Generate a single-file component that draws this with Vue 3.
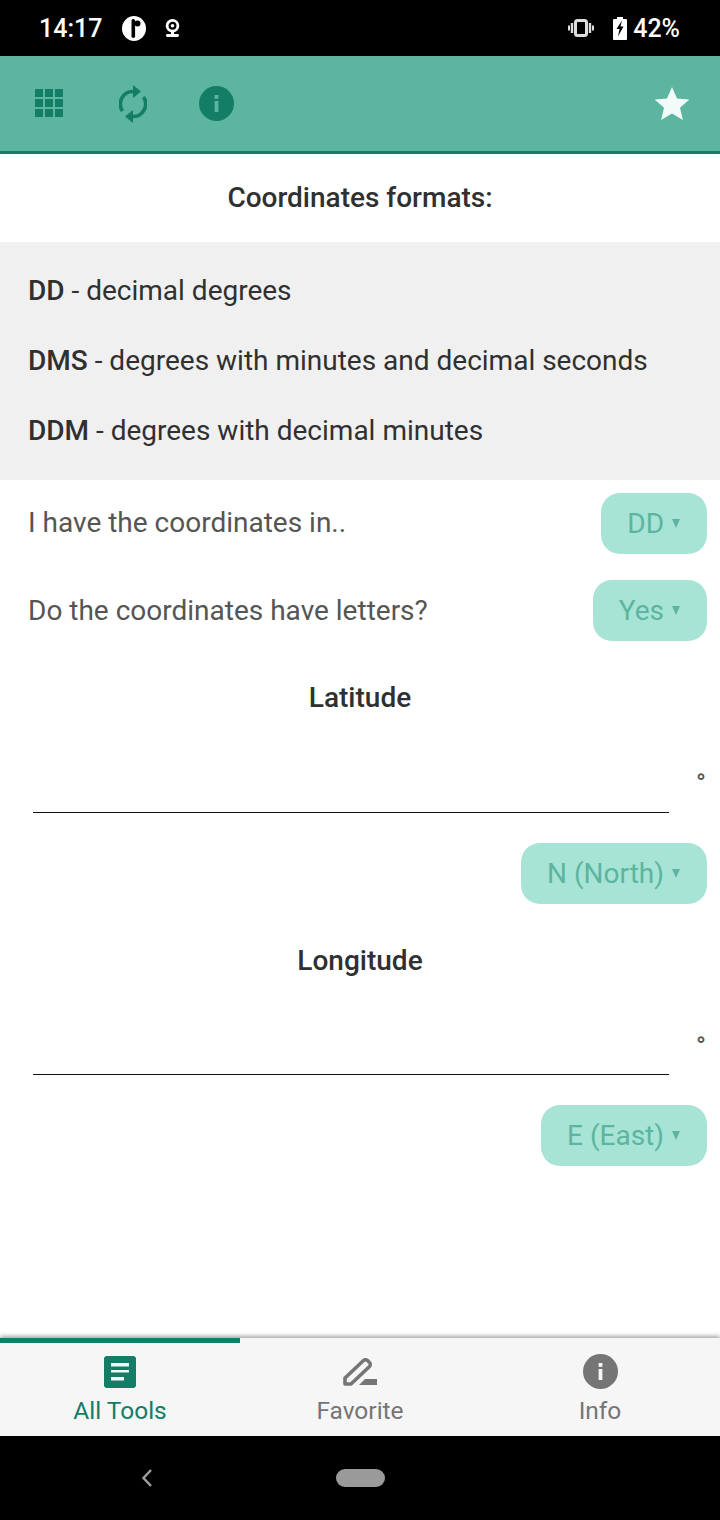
<script setup>
const formats = [
  { key: 'DD', text: ' - decimal degrees' },
  { key: 'DMS', text: ' - degrees with minutes and decimal seconds' },
  { key: 'DDM', text: ' - degrees with decimal minutes' }
]
const grid = [0, 1, 2, 3, 4, 5, 6, 7, 8]
</script>

<template>
  <div class="screen">
    <div class="status-bar">
      <div class="status-left">
        <span class="time">14:17</span>
        <svg class="ic-pi" width="24" height="25" viewBox="0 0 24 25">
          <ellipse cx="12" cy="12.5" rx="12" ry="12.500" fill="#fff" />
          <rect x="9.500" y="3" width="3.600" height="19" rx="1.800" fill="#000" />
          <circle cx="15.500" cy="7.500" r="3" fill="#000" />
        </svg>
        <svg class="ic-cam" width="17" height="18" viewBox="0 0 17 18">
          <circle cx="8.500" cy="6.800" r="5.400" fill="none" stroke="#fff" stroke-width="2.800" />
          <circle cx="8.500" cy="6.800" r="1.800" fill="#fff" />
          <rect x="2" y="15" width="13" height="3" rx="1.400" fill="#fff" />
          <rect x="7" y="12" width="3" height="4" fill="#fff" />
        </svg>
      </div>
      <div class="status-right">
        <svg width="26" height="18" viewBox="0 0 26 18">
          <rect x="7.500" y="1.500" width="11" height="15" rx="2" fill="none" stroke="#ddd" stroke-width="3" />
          <path d="M4 4v10M22 4v10" stroke="#ddd" stroke-width="2.400" />
          <path d="M1 6.500v5M25 6.500v5" stroke="#ddd" stroke-width="2" />
        </svg>
        <svg class="ic-batt" width="14" height="23" viewBox="0 0 14 23">
          <path d="M4 0h6v2h3a1 1 0 0 1 1 1v19a1 1 0 0 1-1 1H1a1 1 0 0 1-1-1V3a1 1 0 0 1 1-1h3z" fill="#fff" />
          <path d="M9 3.500 3.500 12h3l-1.500 7.500 5.500-10H7.500z" fill="#000" />
        </svg>
        <span class="pct">42%</span>
      </div>
    </div>

    <header class="toolbar">
      <div class="toolbar-left">
        <div class="grid-icon">
          <span v-for="n in grid" :key="n"></span>
        </div>
        <svg class="refresh" width="28" height="38" viewBox="0 0 28 38" fill="none">
          <path d="M3.500 26A12.500 12.500 0 0 1 15 6.600" stroke="#137d66" stroke-width="3.600" />
          <path d="M24.500 12A12.500 12.500 0 0 1 13 31.400" stroke="#137d66" stroke-width="3.600" />
          <path d="M14 0 22 6.500 14 13z" fill="#137d66" />
          <path d="M14 25 6 31.500 14 38z" fill="#137d66" />
        </svg>
        <svg class="info" width="35" height="35" viewBox="0 0 35 35">
          <circle cx="17.500" cy="17.500" r="17.500" fill="#137d66" />
          <rect x="15.600" y="15" width="3.800" height="11" fill="#5bb5a0" />
          <rect x="15.600" y="9" width="3.800" height="3.800" fill="#5bb5a0" />
        </svg>
      </div>
      <svg width="36" height="34" viewBox="0 0 36 34">
        <path d="M18 0l5 11.600 12.400 1-9.400 8.200 2.900 12.200L18 26.500 7.100 33l2.900-12.200L.6 12.600l12.400-1z" fill="#f1fbf9" />
      </svg>
    </header>

    <h2 class="title">Coordinates formats:</h2>

    <section class="formats">
      <p v-for="f in formats" :key="f.key"><b>{{ f.key }}</b>{{ f.text }}</p>
    </section>

    <main class="form">
      <div class="row row-first">
        <span>I have the coordinates in..</span>
        <div class="pill">DD<i class="caret"></i></div>
      </div>
      <div class="row row-second">
        <span>Do the coordinates have letters?</span>
        <div class="pill">Yes<i class="caret"></i></div>
      </div>

      <h3 class="label">Latitude</h3>
      <div class="coord coord-lat">
        <div class="line"></div>
        <span class="deg">°</span>
      </div>
      <div class="pill-end"><div class="pill">N (North)<i class="caret"></i></div></div>

      <h3 class="label">Longitude</h3>
      <div class="coord coord-lon">
        <div class="line"></div>
        <span class="deg">°</span>
      </div>
      <div class="pill-end"><div class="pill">E (East)<i class="caret"></i></div></div>
    </main>

    <nav class="tabs">
      <div class="tab active">
        <div class="tab-icon">
          <svg width="32" height="32" viewBox="0 0 32 32">
            <rect width="32" height="32" rx="3" fill="#137d66" />
            <path d="M7 7h18v3.500H7zM7 14h18v2.500H7zM7 21h13v3.500H7z" fill="#f6f6f6" />
          </svg>
        </div>
        <span>All Tools</span>
      </div>
      <div class="tab">
        <div class="tab-icon">
          <svg width="34" height="28" viewBox="0 0 34 28" fill="none">
            <path d="M2 26v-6L20.500 2.500c1-1 3-1 4 0l2 2c1 1 1 3 0 4L8 26z" stroke="#757575" stroke-width="3.600" stroke-linejoin="round" />
            <path d="M16 27l6-6h12v6z" fill="#757575" />
          </svg>
        </div>
        <span>Favorite</span>
      </div>
      <div class="tab">
        <div class="tab-icon">
          <svg width="35" height="35" viewBox="0 0 35 35">
            <circle cx="17.500" cy="17.500" r="17.500" fill="#757575" />
            <rect x="15.600" y="15" width="3.800" height="11" fill="#f6f6f6" />
            <rect x="15.600" y="9" width="3.800" height="3.800" fill="#f6f6f6" />
          </svg>
        </div>
        <span>Info</span>
      </div>
    </nav>

    <div class="nav-bar">
      <svg class="back" width="12" height="18" viewBox="0 0 12 18" fill="none">
        <path d="M10 1 2.500 9l7.500 8" stroke="#a0a0a0" stroke-width="2.400" />
      </svg>
      <div class="home"></div>
    </div>
  </div>
</template>

<style scoped>
.screen {
  width: 720px;
  height: 1520px;
  display: flex;
  flex-direction: column;
  font-family: Roboto, sans-serif;
  background: #fff;
  overflow: hidden;
}

.status-bar {
  height: 56px;
  flex: none;
  background: #000;
  color: #fff;
  display: flex;
  align-items: center;
  justify-content: space-between;
  padding: 0 40px 0 39px;
  font-size: 25px;
  font-weight: 500;
}
.status-left,
.status-right {
  display: flex;
  align-items: center;
}
.ic-pi {
  margin-left: 20px;
}
.ic-cam {
  margin-left: 18px;
}
.ic-batt {
  margin-left: 19px;
}
.pct {
  margin-left: 6px;
}

.toolbar {
  height: 98px;
  flex: none;
  box-sizing: border-box;
  background: #5bb5a0;
  border-bottom: 3px solid #137d66;
  display: flex;
  align-items: center;
  justify-content: space-between;
  padding: 0 30px 0 35px;
}
.toolbar-left {
  display: flex;
  align-items: center;
}
.refresh {
  margin-left: 56px;
}
.info {
  margin-left: 52px;
}
.grid-icon {
  width: 28px;
  height: 28px;
  margin-top: -1px;
  display: grid;
  grid-template-columns: repeat(3, 7.600px);
  grid-auto-rows: 7.600px;
  gap: 2.600px;
}
.grid-icon span {
  background: #137d66;
}

.title {
  height: 88px;
  flex: none;
  margin: 0;
  line-height: 88px;
  text-align: center;
  font-size: 28px;
  font-weight: 500;
  color: #303030;
}

.formats {
  height: 238px;
  flex: none;
  box-sizing: border-box;
  background: #f0f0f0;
  padding: 14px 28px 0;
  color: #303030;
  font-size: 28px;
}
.formats p {
  margin: 0;
  height: 70px;
  line-height: 70px;
}
.formats b {
  font-weight: 500;
}

.form {
  flex: 1;
  color: #555;
  font-size: 28px;
}
.row {
  display: flex;
  align-items: center;
  justify-content: space-between;
  padding: 0 13px 0 28px;
}
.row-first {
  margin-top: 13px;
}
.row-first span {
  margin-bottom: 2px;
}
.row-second {
  margin-top: 26px;
}
.pill {
  height: 61px;
  box-sizing: border-box;
  padding: 0 27px 0 26px;
  border-radius: 19px;
  background: #a8e4d5;
  color: #5bb5a0;
  display: flex;
  align-items: center;
}
.caret {
  width: 0;
  height: 0;
  margin-left: 8px;
  border-left: 4px solid transparent;
  border-right: 4px solid transparent;
  border-top: 9px solid #5bb5a0;
}
.label {
  margin: 41px 0 0;
  text-align: center;
  font-size: 28px;
  font-weight: 500;
  color: #303030;
  line-height: 32px;
}
.coord {
  box-sizing: border-box;
  display: flex;
  padding-left: 33px;
}
.coord-lat {
  height: 99px;
}
.coord-lon {
  height: 98px;
}
.line {
  width: 636px;
  height: 1px;
  background: #111;
  align-self: flex-end;
}
.deg {
  margin: 56px 0 0 27px;
  font-size: 26px;
  line-height: 26px;
  font-weight: 500;
  color: #555;
}
.pill-end {
  display: flex;
  justify-content: flex-end;
  padding-right: 13px;
  margin-top: 30px;
}

.tabs {
  height: 98px;
  flex: none;
  background: #f6f6f6;
  display: grid;
  grid-template-columns: repeat(3, 1fr);
  box-shadow: 0 -2px 4px rgba(0, 0, 0, 0.35);
  position: relative;
}
.tab {
  box-sizing: border-box;
  display: flex;
  flex-direction: column;
  align-items: center;
  padding-top: 16px;
  color: #757575;
  font-size: 24.500px;
  position: relative;
}
.tab-icon {
  height: 35px;
  display: flex;
  align-items: center;
}
.tab span {
  margin-top: 7px;
  line-height: 30px;
}
.tab.active {
  color: #137d66;
}
.tab.active::before {
  content: '';
  position: absolute;
  top: 0;
  left: 0;
  right: 0;
  height: 5px;
  background: #137d66;
}

.nav-bar {
  height: 84px;
  flex: none;
  background: #000;
  position: relative;
}
.back {
  position: absolute;
  left: 141px;
  top: 33px;
}
.home {
  position: absolute;
  left: 336px;
  top: 33px;
  width: 49px;
  height: 18px;
  border-radius: 9px;
  background: #9a9a9a;
}
</style>
